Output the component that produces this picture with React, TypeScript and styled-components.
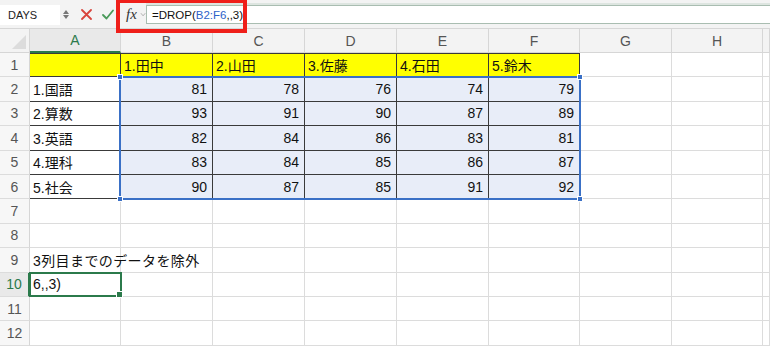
import React from 'react';
import styled, { createGlobalStyle } from 'styled-components';

const GlobalStyle = createGlobalStyle`
  html, body {
    margin: 0;
    padding: 0;
    background: #ffffff;
  }
  body {
    font-family: "Liberation Sans", "Noto Sans CJK JP", sans-serif;
    overflow: hidden;
  }
  * {
    box-sizing: border-box;
  }
`;

const Page = styled.div`
  position: relative;
  width: 770px;
  height: 346px;
  overflow: hidden;
  background: #ffffff;
`;

const FormulaBar = styled.div`
  height: 29px;
  display: flex;
  align-items: center;
  background: #f3f3f3;
  border-bottom: 1px solid #d6d6d6;
`;

const NameBox = styled.div`
  width: 60px;
  height: 20px;
  margin-top: 1px;
  display: flex;
  align-items: center;
  padding-left: 8px;
  font-size: 11px;
  color: #222;
  background: #ffffff;
`;

const Spinner = styled.div`
  width: 10px;
  display: flex;
  flex-direction: column;
  align-items: center;
  justify-content: center;
  gap: 1px;
  margin-left: 1px;
`;

const IconBtn = styled.div`
  width: 22px;
  display: flex;
  align-items: center;
  justify-content: center;
`;

const FxArea = styled.div`
  width: 27px;
  display: flex;
  align-items: center;
  gap: 3px;
`;

const Fx = styled.span`
  font-family: "Liberation Serif", serif;
  font-style: italic;
  font-size: 15px;
  color: #333;
  margin-left: 7px;
`;

const FormulaInput = styled.div`
  flex: 1;
  height: 19px;
  margin-top: 1px;
  display: flex;
  align-items: center;
  padding-left: 5px;
  background: #ffffff;
  border: 1px solid #a9bdb1;
  border-right: none;
  box-shadow: 0 -2px 0 #dde5e0;
  font-size: 11.5px;
  color: #111;
`;

const Ref = styled.span`
  color: #2d62c9;
`;

const Caret = styled.span`
  display: inline-block;
  width: 1px;
  height: 13px;
  background: #111;
  margin-left: 1px;
`;

const Callout = styled.div`
  position: absolute;
  left: 116px;
  top: -1px;
  width: 131px;
  height: 34px;
  border: 4.5px solid #ef1f1a;
  pointer-events: none;
`;

const Sheet = styled.div`
  display: grid;
  grid-template-columns: 30px 91px 92px 92px 92px 92px 91px 92px 91px 1fr;
  grid-template-rows: 24px repeat(12, 24.4px);
`;

const Corner = styled.div`
  grid-column: 1;
  grid-row: 1;
  background: #f3f3f3;
  border-right: 1px solid #d6d6d6;
  border-bottom: 1px solid #d6d6d6;
  position: relative;
  overflow: hidden;
  &::after {
    content: '';
    position: absolute;
    right: 3px;
    bottom: 3px;
    border-style: solid;
    border-width: 0 0 14px 14px;
    border-color: transparent transparent #dcdcdc transparent;
  }
`;

const ColHead = styled.div<{ $c: number; $active?: boolean }>`
  grid-column: ${(p) => p.$c};
  grid-row: 1;
  display: flex;
  align-items: center;
  justify-content: center;
  font-size: 14px;
  color: ${(p) => (p.$active ? '#2b7a4b' : '#555')};
  background: ${(p) => (p.$active ? '#e9e9e9' : '#f3f3f3')};
  border-right: 1px solid #d6d6d6;
  border-bottom: ${(p) => (p.$active ? '2px solid #2b7a4b' : '1px solid #d6d6d6')};
`;

const RowHead = styled.div<{ $r: number; $active?: boolean }>`
  grid-column: 1;
  grid-row: ${(p) => p.$r + 1};
  display: flex;
  align-items: center;
  justify-content: center;
  font-size: 14px;
  color: ${(p) => (p.$active ? '#2b7a4b' : '#555')};
  background: ${(p) => (p.$active ? '#e9e9e9' : '#f7f7f7')};
  border-right: ${(p) => (p.$active ? '2px solid #2b7a4b' : '1px solid #d6d6d6')};
  border-bottom: 1px solid #dcdcdc;
`;

const Cell = styled.div<{
  $r: number;
  $c: number;
  $num?: boolean;
  $fill?: string;
  $boxed?: boolean;
}>`
  grid-column: ${(p) => p.$c + 1};
  grid-row: ${(p) => p.$r + 1};
  display: flex;
  align-items: center;
  justify-content: ${(p) => (p.$num ? 'flex-end' : 'flex-start')};
  padding: 0 ${(p) => (p.$num ? '5px' : '3px')} 0 3px;
  font-size: 14px;
  color: #111;
  white-space: nowrap;
  overflow: visible;
  background: ${(p) => p.$fill || 'transparent'};
  border-right: 1px solid ${(p) => (p.$boxed ? '#3a3a3a' : '#dcdcdc')};
  border-bottom: 1px solid ${(p) => (p.$boxed ? '#3a3a3a' : '#dcdcdc')};
  box-shadow: ${(p) =>
    p.$boxed && p.$r === 1 ? 'inset 0 1px 0 #3a3a3a' : 'none'};
`;

const Note = styled.span`
  letter-spacing: 0.4px;
`;

const Selection = styled.div`
  grid-column: 3 / 8;
  grid-row: 3 / 8;
  position: relative;
  z-index: 2;
  margin: -1px -1px -1px -2px;
  border: 2px solid #3a70c6;
  pointer-events: none;
`;

const Handle = styled.span<{ $x: 'left' | 'right'; $y: 'top' | 'bottom' }>`
  position: absolute;
  width: 6px;
  height: 6px;
  background: #3a70c6;
  border: 1px solid #ffffff;
  ${(p) => p.$x}: -4px;
  ${(p) => p.$y}: -4px;
`;

const ActiveCell = styled.div`
  grid-column: 2;
  grid-row: 11;
  position: relative;
  z-index: 2;
  margin: -1px -1px 0 -1px;
  border: 2px solid #2b7a4b;
  pointer-events: none;
  &::after {
    content: '';
    position: absolute;
    right: -3px;
    bottom: -3px;
    width: 5px;
    height: 5px;
    background: #2b7a4b;
    border: 1px solid #ffffff;
  }
`;

const COLS = ['A', 'B', 'C', 'D', 'E', 'F', 'G', 'H', ''];

const header = ['', '1.田中', '2.山田', '3.佐藤', '4.石田', '5.鈴木'];
const subjects = ['1.国語', '2.算数', '3.英語', '4.理科', '5.社会'];
const scores = [
  [81, 78, 76, 74, 79],
  [93, 91, 90, 87, 89],
  [82, 84, 86, 83, 81],
  [83, 84, 85, 86, 87],
  [90, 87, 85, 91, 92],
];

const SEL_FILL = '#e8edf8';
const YELLOW = '#ffff00';

const App: React.FC = () => {
  const cells: React.ReactNode[] = [];

  for (let r = 1; r <= 12; r++) {
    for (let c = 1; c <= 9; c++) {
      let text: React.ReactNode = '';
      let num = false;
      let fill: string | undefined;
      let boxed = false;

      if (r === 1 && c <= 6) {
        text = header[c - 1];
        fill = YELLOW;
        boxed = true;
      } else if (r >= 2 && r <= 6 && c === 1) {
        text = subjects[r - 2];
        boxed = true;
      } else if (r >= 2 && r <= 6 && c >= 2 && c <= 6) {
        text = scores[r - 2][c - 2];
        num = true;
        fill = SEL_FILL;
        boxed = true;
      } else if (r === 9 && c === 1) {
        text = <Note>3列目までのデータを除外</Note>;
      } else if (r === 10 && c === 1) {
        text = '6,,3)';
      }

      cells.push(
        <Cell key={`${r}-${c}`} $r={r} $c={c} $num={num} $fill={fill} $boxed={boxed}>
          {text}
        </Cell>
      );
    }
  }

  return (
    <Page>
      <GlobalStyle />
      <FormulaBar>
        <NameBox>DAYS</NameBox>
        <Spinner>
          <svg width="6" height="4" viewBox="0 0 6 4">
            <path d="M0 4 L3 0 L6 4 Z" fill="#777" />
          </svg>
          <svg width="6" height="4" viewBox="0 0 6 4">
            <path d="M0 0 L3 4 L6 0 Z" fill="#777" />
          </svg>
        </Spinner>
        <IconBtn style={{ marginLeft: 4 }}>
          <svg width="11" height="11" viewBox="0 0 11 11">
            <path d="M1 1 L10 10 M10 1 L1 10" stroke="#d9443c" strokeWidth="1.8" strokeLinecap="round" />
          </svg>
        </IconBtn>
        <IconBtn>
          <svg width="12" height="11" viewBox="0 0 12 11">
            <path d="M1 6 L4.5 9.5 L11 1.5" stroke="#4a9a5a" strokeWidth="1.8" fill="none" strokeLinecap="round" strokeLinejoin="round" />
          </svg>
        </IconBtn>
        <FxArea>
          <Fx>fx</Fx>
          <svg width="7" height="5" viewBox="0 0 7 5">
            <path d="M1 1 L3.5 4 L6 1" stroke="#aaa" strokeWidth="1" fill="none" />
          </svg>
        </FxArea>
        <FormulaInput>
          =DROP(<Ref>B2:F6</Ref>,,3)
          <Caret />
        </FormulaInput>
      </FormulaBar>

      <Sheet>
        <Corner />
        {COLS.map((label, i) => (
          <ColHead key={i} $c={i + 2} $active={label === 'A'}>
            {label}
          </ColHead>
        ))}
        {Array.from({ length: 12 }, (_, i) => (
          <RowHead key={i} $r={i + 1} $active={i + 1 === 10}>
            {i + 1}
          </RowHead>
        ))}
        {cells}
        <Selection>
          <Handle $x="left" $y="top" />
          <Handle $x="right" $y="top" />
          <Handle $x="left" $y="bottom" />
          <Handle $x="right" $y="bottom" />
        </Selection>
        <ActiveCell />
      </Sheet>

      <Callout />
    </Page>
  );
};

export default App;
